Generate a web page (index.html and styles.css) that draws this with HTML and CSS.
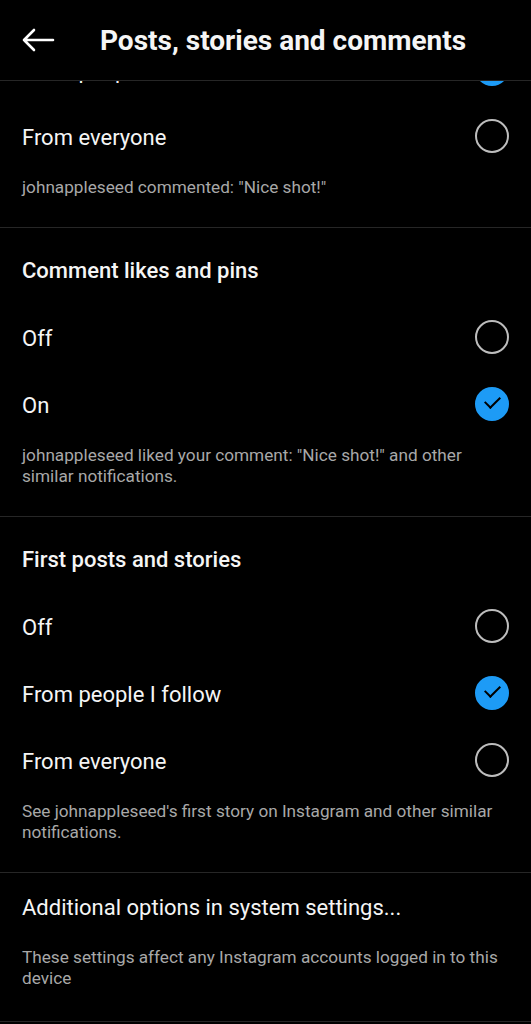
FILE: index.html
```html
<!DOCTYPE html>
<html lang="en">
<head>
    <meta charset="UTF-8">
    <meta name="viewport" content="width=device-width, initial-scale=1.0">
    <title>Posts, stories and comments</title>
    <link rel="stylesheet" href="styles.css">
</head>
<body>

    <!-- Top bar lies over the scrolled list -->
    <div class="topbar">
        <svg class="back" width="34" height="24" viewBox="0 0 34 24">
            <path d="M32 12H3M13 2L3 12l10 10" fill="none" stroke="#fff" stroke-width="2.6" stroke-linecap="round" stroke-linejoin="round"/>
        </svg>
        <h1>Posts, stories and comments</h1>
    </div>

    <div class="list">
        <div class="section first">
            <div class="row">
                <span>From people I follow</span>
                <span class="radio checked"></span>
            </div>
            <div class="row">
                <span>From everyone</span>
                <span class="radio"></span>
            </div>
            <p class="caption">johnappleseed commented: "Nice shot!"</p>
        </div>

        <div class="section">
            <h2>Comment likes and pins</h2>
            <div class="row">
                <span>Off</span>
                <span class="radio"></span>
            </div>
            <div class="row">
                <span>On</span>
                <span class="radio checked"></span>
            </div>
            <p class="caption">johnappleseed liked your comment: "Nice shot!" and other similar notifications.</p>
        </div>

        <div class="section">
            <h2>First posts and stories</h2>
            <div class="row">
                <span>Off</span>
                <span class="radio"></span>
            </div>
            <div class="row">
                <span>From people I follow</span>
                <span class="radio checked"></span>
            </div>
            <div class="row">
                <span>From everyone</span>
                <span class="radio"></span>
            </div>
            <p class="caption">See johnappleseed's first story on Instagram and other similar notifications.</p>
        </div>

        <div class="section system">
            <div class="link">Additional options in system settings...</div>
            <p class="caption">These settings affect any Instagram accounts logged in to this device</p>
        </div>
    </div>

</body>
</html>
```

FILE: styles.css
```css
* {
    margin: 0;
    padding: 0;
    box-sizing: border-box;
}

body {
    font-family: Roboto, "Noto Sans", sans-serif;
    background: #000;
    color: #f5f5f5;
    width: 531px;
    height: 1024px;
    overflow: hidden;
    position: relative;
}

/* Top bar */
.topbar {
    position: absolute;
    top: 0;
    left: 0;
    width: 100%;
    height: 81px;
    background: #000;
    border-bottom: 1px solid #262626;
    display: flex;
    align-items: center;
    padding: 0 0 0 21px;
    z-index: 10;
}

.back {
    display: block;
    margin-top: -1px;
}

.topbar h1 {
    font-size: 28px;
    font-weight: 700;
    margin-left: 45px;
}

/* List */
.list {
    padding-top: 37px;
}

.section {
    border-top: 1px solid #262626;
    padding: 0 22px;
}

.section.first {
    border-top: none;
}

.section h2 {
    font-size: 22px;
    font-weight: 500;
    line-height: 28px;
    padding: 29px 0 20px;
}

.row {
    height: 67px;
    display: flex;
    align-items: center;
    justify-content: space-between;
    font-size: 22px;
}

.radio {
    width: 34px;
    height: 34px;
    border-radius: 50%;
    border: 2.5px solid #bdbdbd;
    margin-top: -3px;
    position: relative;
}

.radio.checked {
    background: #1d9bf6;
    border-color: #1d9bf6;
}

/* Check mark inside the blue circle */
.radio.checked::after {
    content: "";
    position: absolute;
    left: 8px;
    top: 7px;
    width: 13px;
    height: 7px;
    border-left: 2.5px solid #000;
    border-bottom: 2.5px solid #000;
    transform: rotate(-45deg);
}

.caption {
    font-size: 17.2px;
    line-height: 21px;
    color: #a8a8a8;
    padding: 6px 0 29px;
}

.system .link {
    font-size: 22px;
    line-height: 28px;
    padding-top: 21px;
}

.system .caption {
    padding-top: 25px;
    padding-bottom: 32px;
}

.system {
    border-bottom: 1px solid #262626;
}
```
